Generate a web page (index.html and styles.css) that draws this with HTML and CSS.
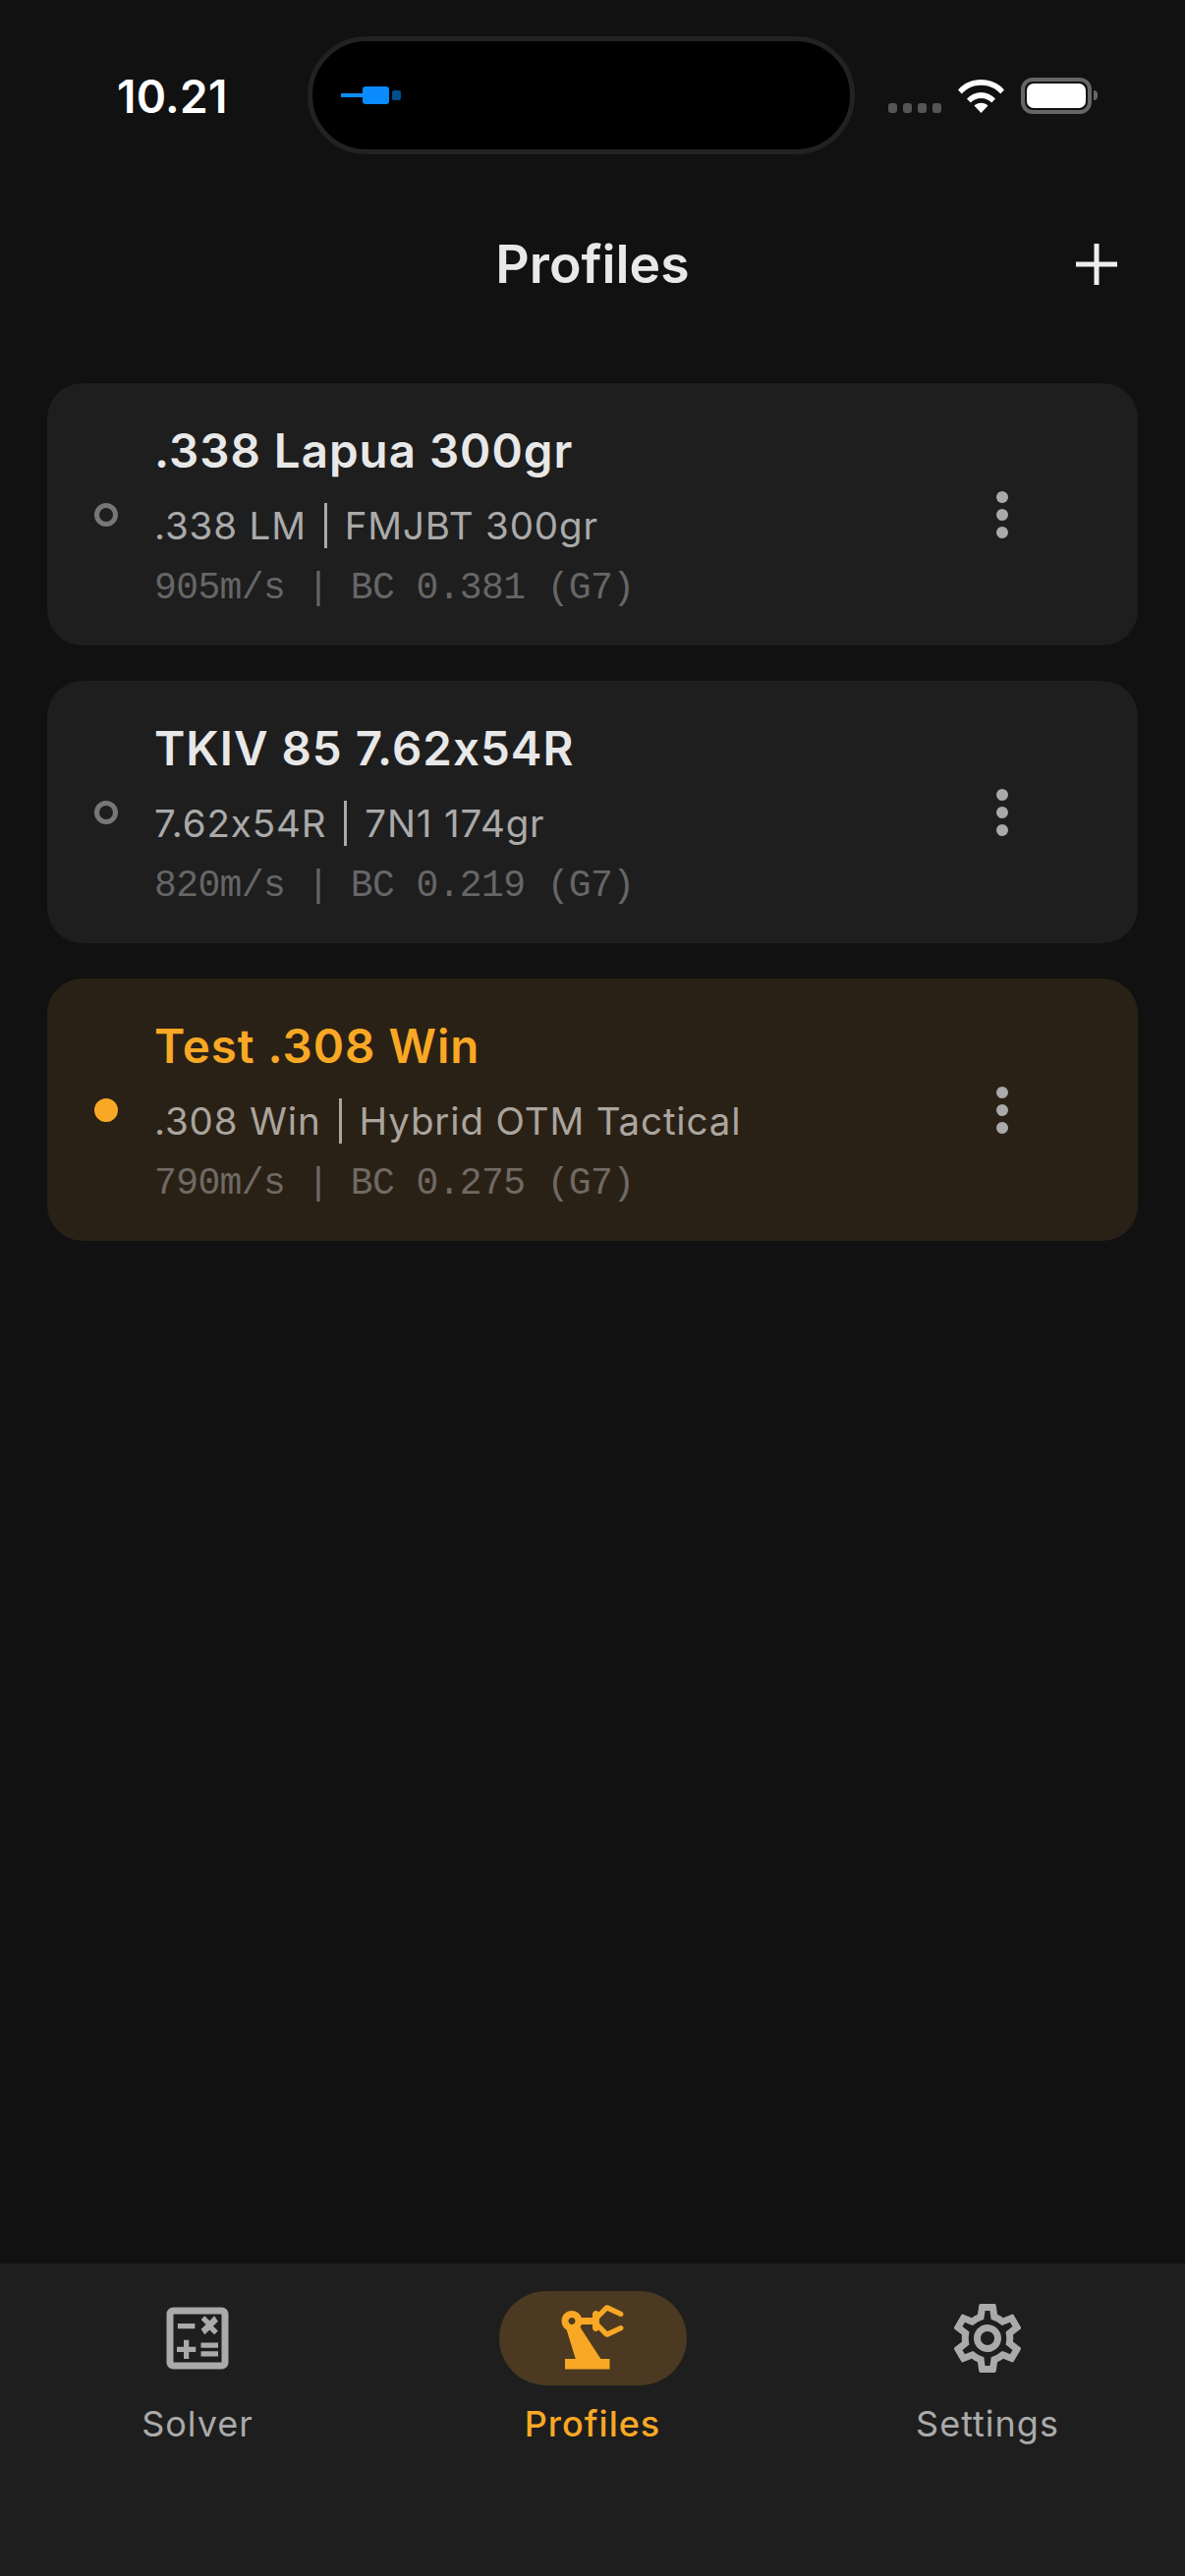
FILE: index.html
```html
<!DOCTYPE html>
<html lang="en">
<head>
    <meta charset="UTF-8">
    <meta name="viewport" content="width=device-width, initial-scale=1.0">
    <title>Profiles</title>
    <link rel="stylesheet" href="styles.css">
</head>
<body>
    <div class="status-bar">
        <div class="time">10.21</div>
        <div class="island">
            <span class="plug-line"></span><span class="plug-body"></span><span class="plug-tip"></span>
        </div>
        <div class="status-icons">
            <div class="signal"><span></span><span></span><span></span><span></span></div>
            <svg class="wifi" viewBox="0 0 47 35">
                <path d="M0 11.5C6 4.5 14 1 23.5 1S41 4.500 47 11.500l-3.800 4C38 9.800 31.500 6.800 23.500 6.800S9 9.800 3.800 15.500z" fill="#fff"/>
                <path d="M9 20.500C13 16.200 18 14 23.500 14S34 16.200 38 20.500l-3.800 4C31.300 21.500 27.700 20 23.500 20s-7.800 1.500-10.700 4.500z" fill="#fff"/>
                <path d="M16.500 27.500c2-1.800 4.300-2.700 7-2.700s5 .9 7 2.700l-7 7.500z" fill="#fff"/>
            </svg>
            <div class="battery"><span class="battery-fill"></span></div>
            <span class="battery-nub"></span>
        </div>
    </div>

    <div class="header">
        <h1>Profiles</h1>
        <svg class="add-icon" viewBox="0 0 42 42">
            <path d="M21 0v42M0 21h42" stroke="#eee" stroke-width="5" fill="none"/>
        </svg>
    </div>

    <div class="profile-list">
        <div class="profile-card">
            <span class="radio"></span>
            <div class="profile-text">
                <div class="profile-name">.338 Lapua 300gr</div>
                <div class="profile-sub">.338 LM<span class="sep"></span>FMJBT 300gr</div>
                <div class="profile-data">905m/s | BC 0.381 (G7)</div>
            </div>
            <div class="kebab"><span></span><span></span><span></span></div>
        </div>
        <div class="profile-card">
            <span class="radio"></span>
            <div class="profile-text">
                <div class="profile-name">TKIV 85 7.62x54R</div>
                <div class="profile-sub">7.62x54R<span class="sep"></span>7N1 174gr</div>
                <div class="profile-data">820m/s | BC 0.219 (G7)</div>
            </div>
            <div class="kebab"><span></span><span></span><span></span></div>
        </div>
        <div class="profile-card active">
            <span class="radio"></span>
            <div class="profile-text">
                <div class="profile-name">Test .308 Win</div>
                <div class="profile-sub">.308 Win<span class="sep"></span>Hybrid OTM Tactical</div>
                <div class="profile-data">790m/s | BC 0.275 (G7)</div>
            </div>
            <div class="kebab"><span></span><span></span><span></span></div>
        </div>
    </div>

    <div class="tab-bar">
        <div class="tab">
            <div class="tab-icon">
                <svg viewBox="0 0 24 24"><path d="M19 3H5c-1.100 0-2 .9-2 2v14c0 1.100.9 2 2 2h14c1.100 0 2-.9 2-2V5c0-1.100-.9-2-2-2zm0 16H5V5h14v14zM6.250 7.720h5v1.500h-5zM13 15.750h5v1.500h-5zM13 13.250h5v1.500h-5zM8 18h1.500v-2h2v-1.500h-2v-2H8v2H6V16h2zM14.090 10.950l1.410-1.410 1.410 1.410 1.060-1.060-1.410-1.420 1.410-1.410L16.910 5.500l-1.410 1.410-1.410-1.410-1.060 1.060 1.410 1.410-1.410 1.420z"/></svg>
            </div>
            <div class="tab-label">Solver</div>
        </div>
        <div class="tab active">
            <div class="tab-icon">
                <svg viewBox="0 0 24 24"><path fill-rule="evenodd" d="M19.930 8.350l-3.600 1.680L14 7.700V6.300l2.330-2.330 3.600 1.680c.38.18.82.01 1-.36.18-.38.01-.82-.36-1l-3.920-1.830c-.38-.18-.83-.1-1.130.2L13.780 4.400C13.600 4.160 13.320 4 13 4c-.55 0-1 .45-1 1v1H8.820C8.400 4.840 7.300 4 6 4 4.340 4 3 5.340 3 7c0 1.100.6 2.050 1.480 2.580L7.080 18H4v3h13v-3h-2.620L8.410 8.770c.17-.24.31-.49.41-.77H12v1c0 .55.45 1 1 1 .32 0 .6-.16.78-.4l1.740 1.740c.3.3.75.38 1.130.2l3.920-1.830c.38-.18.54-.62.36-1-.18-.37-.62-.54-1-.36zM6 8c-.55 0-1-.45-1-1s.45-1 1-1 1 .45 1 1-.45 1-1 1z"/></svg>
            </div>
            <div class="tab-label">Profiles</div>
        </div>
        <div class="tab">
            <div class="tab-icon">
                <svg viewBox="0 0 24 24"><path d="M19.430 12.980c.04-.32.07-.64.07-.98 0-.34-.03-.66-.07-.98l2.110-1.650c.19-.15.24-.42.12-.64l-2-3.460c-.09-.16-.26-.25-.44-.25-.06 0-.12.01-.17.03l-2.490 1c-.52-.4-1.080-.73-1.690-.98l-.38-2.650C14.460 2.180 14.250 2 14 2h-4c-.25 0-.46.18-.49.42l-.38 2.650c-.61.25-1.170.59-1.690.98l-2.490-1c-.06-.02-.12-.03-.18-.03-.17 0-.34.09-.43.25l-2 3.460c-.13.22-.07.49.12.64l2.110 1.650c-.04.32-.07.65-.07.98 0 .33.03.66.07.98l-2.110 1.650c-.19.15-.24.42-.12.64l2 3.460c.09.16.26.25.44.25.06 0 .12-.01.17-.03l2.490-1c.52.4 1.080.73 1.690.98l.38 2.650c.03.24.24.42.49.42h4c.25 0 .46-.18.49-.42l.38-2.650c.61-.25 1.170-.59 1.690-.98l2.490 1c.06.02.12.03.18.03.17 0 .34-.09.43-.25l2-3.460c.12-.22.07-.49-.12-.64l-2.110-1.650zm-1.980-1.710c.04.31.05.52.05.73 0 .21-.02.43-.05.73l-.14 1.130.89.7 1.080.84-.7 1.210-1.270-.51-1.040-.42-.9.68c-.43.32-.84.56-1.250.73l-1.060.43-.16 1.130-.2 1.350h-1.400l-.19-1.350-.16-1.130-1.060-.43c-.43-.18-.83-.41-1.230-.71l-.91-.7-1.060.43-1.270.51-.7-1.210 1.080-.84.89-.7-.14-1.130c-.03-.31-.05-.54-.05-.74s.02-.43.05-.73l.14-1.130-.89-.7-1.080-.84.7-1.210 1.270.51 1.040.42.9-.68c.43-.32.84-.56 1.250-.73l1.060-.43.16-1.130.2-1.350h1.390l.19 1.350.16 1.130 1.060.43c.43.18.83.41 1.230.71l.91.7 1.060-.43 1.270-.51.7 1.210-1.070.85-.89.7.14 1.130zM12 8c-2.210 0-4 1.790-4 4s1.790 4 4 4 4-1.790 4-4-1.790-4-4-4zm0 6c-1.100 0-2-.9-2-2s.9-2 2-2 2 .9 2 2-.9 2-2 2z"/></svg>
            </div>
            <div class="tab-label">Settings</div>
        </div>
    </div>
</body>
</html>
```

FILE: styles.css
```css
body {
    font-family: Inter, "Noto Sans", sans-serif;
    background: #111111;
    margin: 0;
    width: 1206px;
    height: 2622px;
    display: flex;
    flex-direction: column;
    overflow: hidden;
}
.status-bar {
    display: flex;
    height: 120px;
    margin-top: 37px;
    padding-left: 119px;
}
.time {
    width: 194px;
    margin-top: 33px;
    font-size: 46px;
    line-height: 56px;
    font-weight: 600;
    letter-spacing: 0.300px;
    color: #fff;
}
.island {
    box-sizing: border-box;
    width: 557px;
    height: 120px;
    background: #000;
    border: 5px solid #222;
    border-radius: 60px;
    display: flex;
    align-items: center;
    padding-left: 29px;
}
.plug-line {
    width: 22px;
    height: 4px;
    background: #0a8cff;
}
.plug-body {
    width: 27px;
    height: 18px;
    background: #0a8cff;
    border-radius: 3px;
}
.plug-tip {
    width: 9px;
    height: 10px;
    margin-left: 3px;
    background: #004f8c;
    border-radius: 2px;
}
.status-icons {
    display: flex;
    align-items: flex-start;
    margin-left: 34px;
}
.signal {
    display: flex;
    gap: 6px;
    margin-top: 68px;
}
.signal span {
    width: 9px;
    height: 10px;
    background: #555;
    border-radius: 3px;
}
.wifi {
    width: 47px;
    height: 35px;
    margin: 43px 0 0 17px;
}
.battery {
    box-sizing: border-box;
    width: 72px;
    height: 37px;
    margin: 42px 0 0 17px;
    padding: 2px;
    border: 4px solid #666;
    border-radius: 12px;
}
.battery-fill {
    display: block;
    height: 100%;
    background: #fff;
    border-radius: 7px;
}
.battery-nub {
    width: 4px;
    height: 10px;
    margin: 55px 0 0 2px;
    background: #666;
    border-radius: 0 5px 5px 0;
}
.header {
    display: grid;
    grid-template-columns: 1fr auto 1fr;
    align-items: center;
    height: 222px;
    padding-right: 69px;
    padding-left: 69px;
}
h1 {
    grid-column: 2;
    margin: 0;
    font-size: 53.500px;
    font-weight: 600;
    color: #e8e8e8;
}
.add-icon {
    justify-self: end;
    width: 42px;
    height: 42px;
    margin-top: 2px;
}
.profile-list {
    flex: 1;
    display: flex;
    flex-direction: column;
    gap: 36px;
    padding: 11px 48px 0;
}
.profile-card {
    display: flex;
    align-items: center;
    height: 267px;
    padding: 0 132px 0 48px;
    background: #1e1e1e;
    border-radius: 36px;
}
.profile-card.active {
    background: #2a2116;
}
.radio {
    box-sizing: border-box;
    width: 24px;
    height: 24px;
    margin-right: 37px;
    border: 5px solid #777;
    border-radius: 50%;
}
.active .radio {
    background: #f9a825;
    border-color: #f9a825;
}
.profile-text {
    flex: 1;
    padding-top: 5px;
}
.profile-name {
    font-size: 47.500px;
    line-height: 60px;
    font-weight: 600;
    letter-spacing: 1px;
    color: #e8e8e8;
}
.active .profile-name {
    color: #f9a825;
}
.profile-sub {
    margin-top: 18px;
    font-size: 38.500px;
    line-height: 56px;
    letter-spacing: 0.850px;
    color: #aaa;
    display: flex;
    align-items: center;
}
.active .profile-sub {
    color: #aaa59e;
}
.sep {
    width: 3px;
    height: 46px;
    margin: 0 18px;
    background: currentColor;
}
.profile-data {
    margin-top: 11px;
    font-family: "Liberation Mono", monospace;
    font-size: 38px;
    line-height: 50px;
    letter-spacing: -0.600px;
    color: #666;
}
.active .profile-data {
    color: #6f6a64;
}
.kebab {
    display: flex;
    flex-direction: column;
    gap: 6px;
}
.kebab span {
    width: 12px;
    height: 12px;
    background: #aaa;
    border-radius: 50%;
}
.tab-bar {
    display: grid;
    grid-template-columns: 1fr 1fr 1fr;
    height: 318px;
    background: #1e1e1e;
}
.tab {
    display: flex;
    flex-direction: column;
    align-items: center;
    padding-top: 28px;
}
.tab-icon {
    display: flex;
    align-items: center;
    justify-content: center;
    width: 191px;
    height: 96px;
    border-radius: 48px;
}
.tab.active .tab-icon {
    background: #4b3a21;
}
.tab-icon svg {
    width: 84px;
    height: 84px;
    fill: #aaa;
}
.tab.active .tab-icon svg {
    fill: #f9a825;
}
.tab-label {
    margin-top: 16px;
    font-size: 36px;
    line-height: 46px;
    font-weight: 400;
    letter-spacing: 1px;
    color: #aaa;
}
.tab.active .tab-label {
    font-weight: 500;
    color: #f9a825;
}
```
